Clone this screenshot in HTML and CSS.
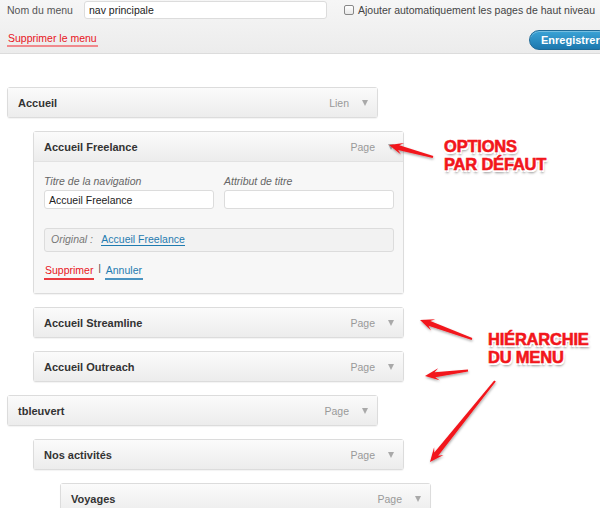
FILE: index.html
```
<!DOCTYPE html>
<html lang="fr">
<head>
<meta charset="utf-8">
<link rel="stylesheet" href="styles.css">
</head>
<body>
<div class="page">
  <header class="menu-header">
    <div class="row-top">
      <label class="name-label">Nom du menu</label>
      <input class="name-input" type="text" value="nav principale">
      <span class="check"></span>
      <span class="auto-label">Ajouter automatiquement les pages de haut niveau</span>
    </div>
    <div class="row-bottom">
      <a class="delete-menu">Supprimer le menu</a>
      <button class="save">Enregistrer</button>
    </div>
  </header>

  <ul class="menu">
    <li class="item d0"><div class="bar"><span class="title">Accueil</span><span class="type">Lien</span><span class="tri"></span></div></li>
    <li class="item d1 open">
      <div class="bar"><span class="title">Accueil Freelance</span><span class="type">Page</span><span class="tri"></span></div>
      <div class="settings">
        <div class="fields">
          <div class="field"><span class="flabel">Titre de la navigation</span><div class="finput">Accueil Freelance</div></div>
          <div class="field"><span class="flabel">Attribut de titre</span><div class="finput"></div></div>
        </div>
        <div class="original"><em>Original :</em> <a>Accueil Freelance</a></div>
        <div class="actions"><a class="del">Supprimer</a><span class="sep">|</span><a class="cancel">Annuler</a></div>
      </div>
    </li>
    <li class="item d1"><div class="bar"><span class="title">Accueil Streamline</span><span class="type">Page</span><span class="tri"></span></div></li>
    <li class="item d1"><div class="bar"><span class="title">Accueil Outreach</span><span class="type">Page</span><span class="tri"></span></div></li>
    <li class="item d0"><div class="bar"><span class="title">tbleuvert</span><span class="type">Page</span><span class="tri"></span></div></li>
    <li class="item d1"><div class="bar"><span class="title">Nos activités</span><span class="type">Page</span><span class="tri"></span></div></li>
    <li class="item d2"><div class="bar"><span class="title">Voyages</span><span class="type">Page</span><span class="tri"></span></div></li>
  </ul>

  <svg class="arrows" width="600" height="508" viewBox="0 0 600 508">
    <defs>
      <filter id="sh" x="-20%" y="-20%" width="140%" height="140%">
        <feDropShadow dx="0.5" dy="1.5" stdDeviation="1" flood-color="#000" flood-opacity="0.35"/>
      </filter>
    </defs>
    <g fill="#f2161b" filter="url(#sh)">
      <polygon points="433.3,156 399.3,145.2 404.1,142.9 389,145 400.9,154.5 398,150 432.7,158"/>
      <polygon points="472.3,338.1 430.3,321.1 435.2,319.2 420,320 431,330.4 428.5,325.8 471.7,339.9"/>
      <polygon points="467.9,369.5 434.6,372.2 438.1,368.2 425,376 439.7,380.2 435.2,377.2 468.1,371.5"/>
      <polygon points="494.2,380.4 434.3,452.6 434.1,447.3 430,462 443.5,454.9 438.2,455.8 495.8,381.6"/>
    </g>
  </svg>
  <div class="callout c1">OPTIONS<br>PAR DÉFAUT</div>
  <div class="callout c2">HIÉRARCHIE<br>DU MENU</div>
</div>
</body>
</html>
```
FILE: styles.css
```
* { box-sizing: border-box; }
html, body { margin: 0; padding: 0; background: #fff; }
body { font-family: "Liberation Sans", Arial, sans-serif; color: #333; font-size: 11px; }
.page { position: relative; width: 600px; height: 508px; overflow: hidden; }

.menu-header {
  height: 54px;
  background: linear-gradient(#f6f6f6, #ececec);
  border-bottom: 1px solid #dcdcdc;
  padding: 1px 0 0 7px;
}
.row-top { display: flex; align-items: center; height: 18px; white-space: nowrap; }
.name-label { font-size: 10.5px; color: #555; width: 77px; }
.name-input {
  width: 243px; height: 18px; border: 1px solid #dcdcdc; border-radius: 3px;
  font: 10.5px "Liberation Sans", Arial, sans-serif; color: #222; padding: 0 4px; background: #fff;
}
.check {
  width: 10px; height: 10px; margin-left: 17px; border: 1px solid #888; border-radius: 2px;
  background: linear-gradient(#fff, #e8e8e8);
}
.auto-label { font-size: 10.5px; color: #444; margin-left: 4px; }
.row-bottom { display: flex; align-items: center; justify-content: space-between; height: 27px; margin-top: 7px; }
.delete-menu {
  font-size: 10.5px; color: #e8151c; border-bottom: 2px solid #f08a8d; padding: 0 1px 1px; margin-top: -1px;
}
.save {
  width: 80px; height: 20px; margin-right: -9px; margin-top: 1px;
  border: 1px solid #1f6b98; border-radius: 10px;
  background: linear-gradient(#3aa3d6, #1d78ae);
  color: #fff; font: bold 11px "Liberation Sans", Arial, sans-serif; text-align: left; padding-left: 11px;
  box-shadow: inset 0 1px 0 rgba(255,255,255,0.3);
}

.menu { list-style: none; margin: 33px 0 0; padding: 0; display: flex; flex-direction: column; gap: 13px; }
.item { width: 371px; border: 1px solid #dcdcdc; border-radius: 3px; background: #f5f5f5; box-shadow: 0 1px 1px rgba(0,0,0,0.05); }
.d0 { margin-left: 7px; }
.d1 { margin-left: 33px; }
.d2 { margin-left: 60px; }
.bar {
  display: flex; align-items: center; height: 29px; padding: 0 0 0 10px;
  background: linear-gradient(#fbfbfb, #ececec);
}
.title { font-weight: bold; font-size: 11px; color: #333; flex: 1; }
.type { font-size: 10.5px; color: #999; }
.tri {
  width: 0; height: 0; margin: 1px 9px 0 13px;
  border-left: 3.5px solid transparent; border-right: 3.5px solid transparent; border-top: 6px solid #a9a9a9;
}
.open .bar { border-bottom: 1px solid #e2e2e2; height: 30px; }
.settings { padding: 13px 9px 13px 10px; background: #f7f7f7; }
.fields { display: flex; gap: 10px; }
.field { display: flex; flex-direction: column; width: 170px; }
.flabel { font-style: italic; color: #666; font-size: 10.5px; height: 14px; }
.finput {
  height: 19px; margin-top: 1px; background: #fff; border: 1px solid #dcdcdc; border-radius: 3px;
  font-size: 10.5px; color: #222; padding: 3px 4px 0;
}
.original {
  margin: 19px 0 0; height: 24px; border: 1px solid #dcdcdc; border-radius: 3px; background: #f2f2f2;
  padding: 4px 6px 0; font-size: 10.5px;
}
.original em { color: #777; margin-right: 6px; }
.original a { color: #1f7bb0; border-bottom: 1px solid #1f7bb0; }
.actions { margin-top: 12px; display: flex; align-items: flex-start; font-size: 10.5px; }
.del { color: #e8151c; border-bottom: 2px solid #ea3a3f; padding: 0 1px 2px; }
.sep { color: #333; margin: -1px 4px 0 4px; font-size: 9px; }
.cancel { color: #1f7bb0; border-bottom: 2px solid #4a93c0; padding: 0 1px 2px; }

.arrows { position: absolute; left: 0; top: 0; pointer-events: none; }
.callout {
  position: absolute; font-family: "Liberation Sans", Arial, sans-serif; font-weight: bold; font-size: 16.5px;
  line-height: 18px; color: #f2161b; letter-spacing: -0.2px;
  -webkit-text-stroke: 0.6px #f2161b;
  text-shadow: 0 0 1px #fff, 1.5px 1.5px 0 #fff, -1.5px -1.5px 0 #fff, 1.5px -1.5px 0 #fff, -1.5px 1.5px 0 #fff, 1px 2.5px 2.5px rgba(0,0,0,0.45);
}
.c1 { left: 444px; top: 137px; }
.c2 { left: 488px; top: 330px; }
```
